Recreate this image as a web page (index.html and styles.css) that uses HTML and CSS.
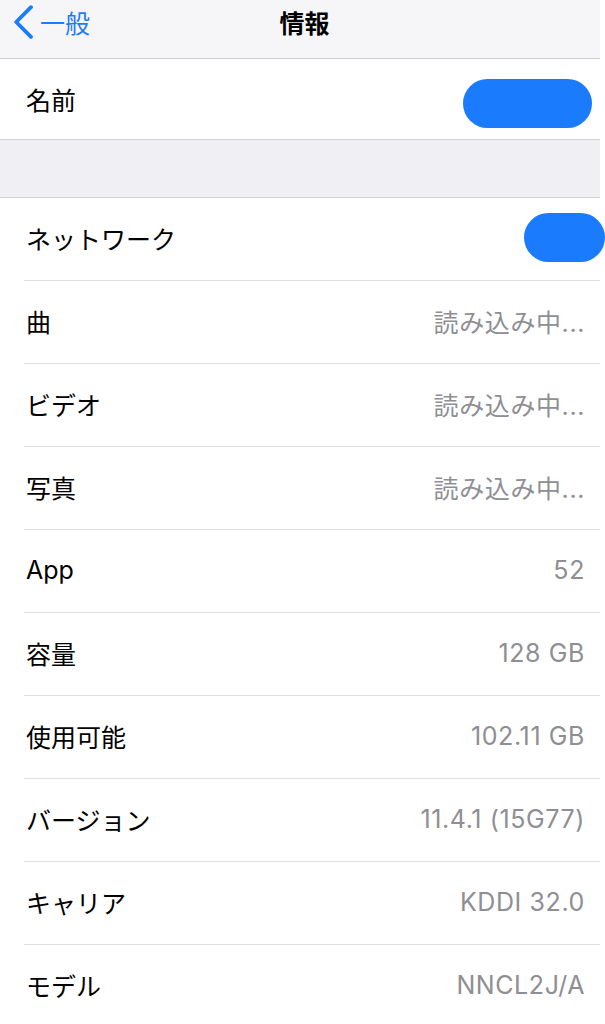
FILE: index.html
```html
<!DOCTYPE html>
<html lang="ja">
<head>
    <meta charset="UTF-8">
    <title>情報</title>
    <link rel="stylesheet" href="styles.css">
</head>
<body>
<div class="page">
    <header class="navbar">
        <a class="back" href="#">
            <svg class="chevron" width="21" height="34" viewBox="0 0 21 34">
                <path d="M18 2.2 L3.2 17 L18 31.8" fill="none" stroke="#1a7cfd" stroke-width="3.8" stroke-linecap="round" stroke-linejoin="round"/>
            </svg>
            <span>一般</span>
        </a>
        <h1 class="title">情報</h1>
        <span></span>
    </header>

    <ul class="group first">
        <li class="row name-row">
            <span class="label">名前</span>
            <span class="pill"></span>
        </li>
    </ul>

    <div class="spacer"></div>

    <ul class="group">
        <li class="row">
            <span class="label">ネットワーク</span>
            <span class="pill cut"></span>
        </li>
        <li class="row">
            <span class="label">曲</span>
            <span class="value">読み込み中...</span>
        </li>
        <li class="row">
            <span class="label">ビデオ</span>
            <span class="value">読み込み中...</span>
        </li>
        <li class="row">
            <span class="label">写真</span>
            <span class="value">読み込み中...</span>
        </li>
        <li class="row">
            <span class="label">App</span>
            <span class="value">52</span>
        </li>
        <li class="row">
            <span class="label">容量</span>
            <span class="value">128 GB</span>
        </li>
        <li class="row">
            <span class="label">使用可能</span>
            <span class="value">102.11 GB</span>
        </li>
        <li class="row">
            <span class="label">バージョン</span>
            <span class="value">11.4.1 (15G77)</span>
        </li>
        <li class="row">
            <span class="label">キャリア</span>
            <span class="value">KDDI 32.0</span>
        </li>
        <li class="row">
            <span class="label">モデル</span>
            <span class="value">NNCL2J/A</span>
        </li>
    </ul>
</div>
</body>
</html>
```

FILE: styles.css
```css
body {
    margin: 0;
    background-color: #fff;
    font-family: Inter, "Noto Sans CJK JP", sans-serif;
    font-size: 25px;
    color: #000;
    overflow: hidden;
}

.page {
    width: 600px;
}

.navbar {
    display: grid;
    grid-template-columns: 1fr auto 1fr;
    align-items: center;
    height: 44px;
    padding-bottom: 14px;
    background-color: #f6f6f8;
    border-bottom: 1px solid #cfced3;
}

.back {
    display: flex;
    align-items: center;
    gap: 6px;
    padding-left: 13px;
    color: #1a7cfd;
    text-decoration: none;
}

.chevron {
    display: block;
}

.title {
    margin: 0 0 0 9px;
    font-size: 25px;
    font-weight: 700;
}

.group {
    list-style: none;
    margin: 0;
    padding: 0;
    background-color: #fff;
}

.first {
    border-bottom: 1px solid #d3d2d7;
}

.spacer {
    height: 57px;
    background-color: #efeff4;
    border-bottom: 1px solid #d3d2d7;
}

.row {
    box-sizing: border-box;
    display: flex;
    align-items: center;
    justify-content: space-between;
    height: 83px;
    margin-left: 24px;
    padding: 0 15px 3px 0;
    border-bottom: 1px solid #dddde1;
}

.name-row {
    height: 80px;
    border-bottom: none;
    padding: 0 8px 0 0;
}

.label {
    padding-left: 2px;
}

.value {
    color: #8e8e93;
    letter-spacing: 0.6px;
}

.pill {
    width: 129px;
    height: 49px;
    border-radius: 25px;
    background-color: #1a7cfd;
}

.name-row .pill {
    margin-top: 8px;
}

.pill.cut {
    width: 81px;
    margin: 0 -20px 0 0;
}
```
